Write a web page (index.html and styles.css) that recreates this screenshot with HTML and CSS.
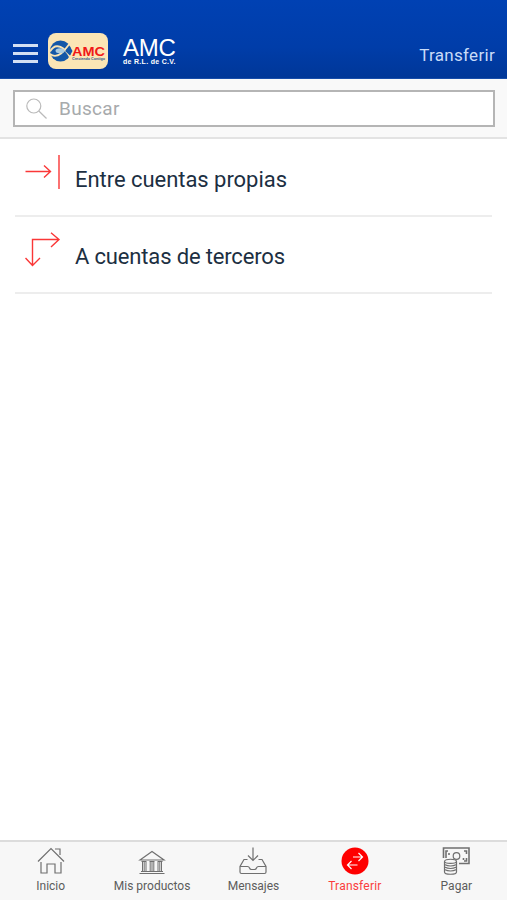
FILE: index.html
```html
<!DOCTYPE html>
<html lang="es">
<head>
<meta charset="utf-8">
<meta name="viewport" content="width=device-width, initial-scale=1">
<title>AMC - Transferir</title>
<link rel="stylesheet" href="styles.css">
</head>
<body>
<header class="header">
  <button class="menu" aria-label="Menú"><span></span><span></span><span></span></button>
  <svg class="logo" viewBox="0 0 60 36">
    <rect width="60" height="36" rx="8" fill="#fbe5b5"/>
    <circle cx="12.5" cy="18" r="10.5" fill="#1458a8"/>
    <path d="M2 18.5C8 8 17 15 22 24 M2 21C10 27 17 17 22 10" fill="none" stroke="#fbe5b5" stroke-width="1.8"/>
    <ellipse cx="12" cy="17.8" rx="4.5" ry="2.5" fill="#a9cbe0"/>
    <path d="M17 18L22 13.5L24.5 18L22 22.5Z" fill="#1458a8"/>
    <text class="logo-name" x="24" y="22.5" textLength="33" lengthAdjust="spacingAndGlyphs">AMC</text>
    <text class="logo-motto" x="24" y="26.7" textLength="33" lengthAdjust="spacingAndGlyphs">Creciendo Contigo</text>
  </svg>
  <div class="brand">
    <div class="brand-name">AMC</div>
    <div class="brand-sub">de R.L. de C.V.</div>
  </div>
  <h1 class="title">Transferir</h1>
</header>

<div class="search">
  <label class="search-box">
    <svg class="search-icon" viewBox="0 0 22 22"><circle cx="7.8" cy="8" r="7"/><path d="M12.8 13 L20.5 20.5"/></svg>
    <span>Buscar</span>
  </label>
</div>

<main class="list">
  <a class="item">
    <svg class="item-icon" viewBox="0 0 36 36"><path d="M.5 17.5H25.5 M19 11.5L25.5 17.5L19 23.5 M34 1V35"/></svg>
    <span>Entre cuentas propias</span>
  </a>
  <a class="item item-third">
    <svg class="item-icon" viewBox="0 0 36 36"><path d="M7.5 33.5V7.5H34 M26 .8L34 7.5L26 15 M.5 26L7.5 33.5L15 26"/></svg>
    <span>A cuentas de terceros</span>
  </a>
</main>

<nav class="tabs">
  <a class="tab">
    <svg class="tab-icon" viewBox="0 0 28 28"><path d="M1 14.5L14 1.5L27 14.5 M4 15V26H10V17H18V26H24V15 M18 2H23V8"/></svg>
    <span>Inicio</span>
  </a>
  <a class="tab">
    <svg class="tab-icon" viewBox="0 0 28 28"><path d="M2 13L14 4.5L26 13Z M1.5 26.5H26.5 M3 24.5H25 M3.5 14.5H8.5 M11.5 14.5H16.5 M19.5 14.5H24.5"/><path class="columns" d="M4.5 15V24 M6.2 15V24 M8 15V24 M12.2 15V24 M14 15V24 M15.8 15V24 M20 15V24 M21.8 15V24 M23.5 15V24"/></svg>
    <span>Mis productos</span>
  </a>
  <a class="tab">
    <svg class="tab-icon" viewBox="0 0 28 28"><path d="M14 .5V13 M9 8.5L14 13.5L19 8.5 M8.5 12.5H5L1 19.5V25Q1 26.5 2.5 26.5H25.5Q27 26.5 27 25V19.5L23 12.5H19.5 M1.5 19.5H8.5Q10 19.5 10.5 21T12.5 22.5H15.5Q17 22.5 17.5 21T19.5 19.5H26.5"/></svg>
    <span>Mensajes</span>
  </a>
  <a class="tab active">
    <svg class="tab-icon" viewBox="0 0 28 28"><circle cx="14" cy="14" r="13.5"/><path d="M12 10H21.5 M17.5 6L21.5 10L17.5 14 M6.5 18H16.5 M10.5 14L6.5 18L10.5 22"/></svg>
    <span>Transferir</span>
  </a>
  <a class="tab">
    <svg class="tab-icon" viewBox="0 0 28 28"><path class="bill" d="M1.5 11V1H27V16.5H17 M4 11V4H6 M22 4H24.5V7 M24.5 11V14H22"/><circle cx="14.5" cy="9" r="3.3"/><path d="M6 7H8 M7 6V8 M20.5 12H22.5 M21.5 11V13"/><path class="coins" d="M2.5 14.5V25C2.5 28 14.5 28 14.5 25V14.5C14.5 11.5 2.5 11.5 2.5 14.5C2.5 17 14.5 17 14.5 14.5 M2.5 17.5Q8.5 20.5 14.5 17.5 M2.5 20Q8.5 23 14.5 20 M2.5 22.5Q8.5 25.5 14.5 22.5"/></svg>
    <span>Pagar</span>
  </a>
</nav>
</body>
</html>
```
FILE: styles.css
```css
* {
  box-sizing: border-box;
}

body {
  margin: 0;
  height: 100vh;
  display: flex;
  flex-direction: column;
  background: #fff;
  color: #1c2f42;
  font-family: Roboto, "Liberation Sans", sans-serif;
}

svg {
  display: block;
  fill: none;
}

.header {
  display: flex;
  align-items: flex-start;
  height: 79px;
  padding: 33px 12px 0 13px;
  background: linear-gradient(#0041b3, #003da9 60%, #003798);
  border-bottom: 1px solid #174da9;
  color: #fff;
}

.menu {
  display: flex;
  flex-direction: column;
  gap: 5px;
  width: 25px;
  margin: 11px 10px 0 0;
  padding: 0;
  border: 0;
  background: none;
}

.menu span {
  height: 3px;
  width: 100%;
  background: #d3dff3;
}

.logo {
  width: 60px;
  height: 36px;
}

.logo-name {
  fill: #f01818;
  font: bold 13px "Liberation Sans", sans-serif;
}

.logo-motto {
  fill: #31548b;
  font: bold 4px "Liberation Sans", sans-serif;
}

.brand {
  margin: 3px 0 0 15px;
  font-family: "Liberation Sans", Arial, sans-serif;
}

.brand-name {
  font-size: 24px;
  line-height: 24px;
  letter-spacing: -.2px;
}

.brand-sub {
  margin-top: -2px;
  font-size: 7px;
  font-weight: bold;
  line-height: 8px;
  letter-spacing: .3px;
}

.title {
  margin: 12px 0 0 auto;
  font-size: 17px;
  font-weight: 400;
  line-height: 20px;
  letter-spacing: .3px;
  color: #c9dcf8;
}

.search {
  height: 60px;
  padding: 11px 12px 0 13px;
  background: #f9f9f9;
  border-bottom: 2px solid #e3e3e3;
}

.search-box {
  display: flex;
  align-items: center;
  height: 37px;
  padding-left: 11px;
  border: 2px solid #b5b5b5;
  background: #fff;
  color: #a7aaac;
  font-size: 19px;
  letter-spacing: .3px;
}

.search-icon {
  width: 22px;
  height: 22px;
  margin-right: 11px;
  stroke: #bababa;
  stroke-width: 1.2;
}

.list {
  flex: 1;
  padding: 0 15px;
}

.item {
  display: flex;
  height: 78px;
  padding: 15px 0 0 10px;
  border-bottom: 2px solid #ededed;
  font-size: 22px;
  line-height: 51px;
  letter-spacing: -.04px;
}

.item-third {
  height: 77px;
  line-height: 50px;
  letter-spacing: -.16px;
}

.item-icon {
  width: 36px;
  height: 36px;
  margin-right: 14px;
  stroke: #fa3737;
  stroke-width: 1.4;
}

.tabs {
  display: grid;
  grid-template-columns: repeat(5, 1fr);
  height: 60px;
  background: #f7f7f7;
  border-top: 2px solid #dcdcdc;
}

.tab {
  display: flex;
  flex-direction: column;
  align-items: center;
  padding-top: 5px;
  color: #5c5c5c;
  font-size: 12px;
  line-height: 14px;
  letter-spacing: 0;
  white-space: nowrap;
}

.tab-icon {
  width: 28px;
  height: 28px;
  margin-bottom: 4px;
  stroke: #707070;
  stroke-width: 1.2;
}

.columns {
  stroke-width: 1;
}

.bill {
  stroke-width: 1.6;
}

.coins {
  fill: #f7f7f7;
}

.active {
  color: #fa3c3c;
  letter-spacing: .2px;
}

.active .tab-icon {
  stroke: #fff;
}

.active circle {
  fill: #fe0000;
  stroke: none;
}
```
